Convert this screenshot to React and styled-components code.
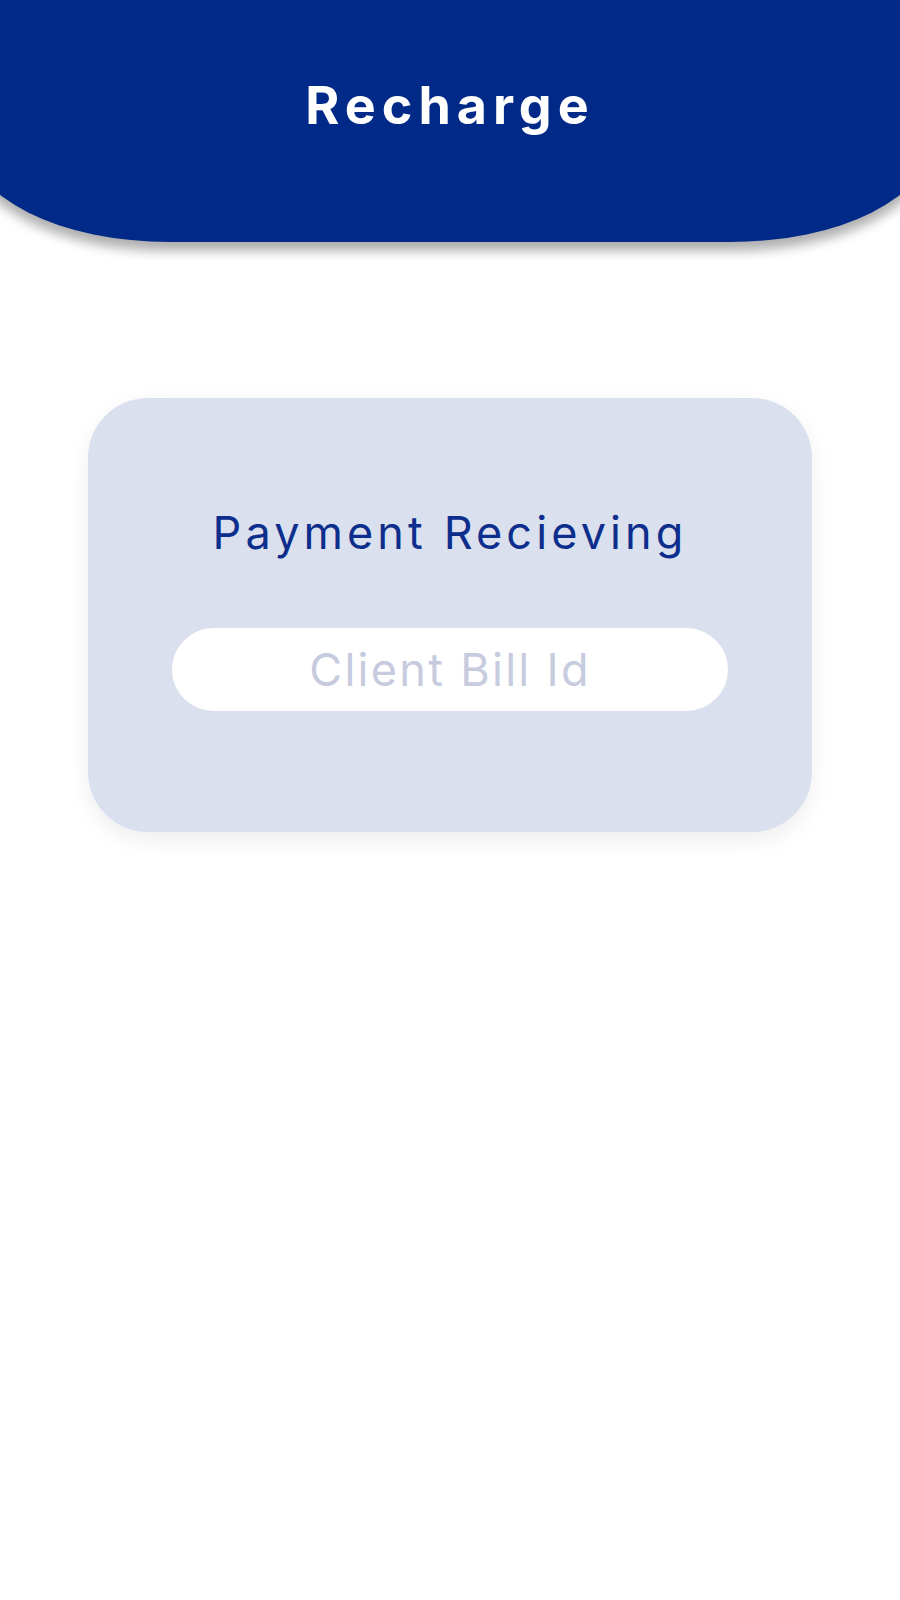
import React from "react";
import styled, { createGlobalStyle } from "styled-components";

const GlobalStyle = createGlobalStyle`
  html, body {
    margin: 0;
    padding: 0;
    background: #ffffff;
  }
  body {
    font-family: Inter, "Open Sans", sans-serif;
    overflow-x: hidden;
  }
  * { box-sizing: border-box; }
`;

const Page = styled.div`
  width: 900px;
  min-height: 1600px;
  background: #ffffff;
  display: flex;
  flex-direction: column;
  align-items: center;
  overflow: hidden;
`;

const Header = styled.header`
  align-self: stretch;
  margin: 0 -30px;
  height: 242px;
  background: #012a88;
  border-bottom-left-radius: 200px 100px;
  border-bottom-right-radius: 200px 100px;
  box-shadow: 0 9px 12px rgba(0, 0, 0, 0.32);
  display: flex;
  justify-content: center;
  padding-top: 74px;
`;

const Title = styled.h1`
  margin: 0;
  font-family: Inter, sans-serif;
  font-weight: 700;
  font-size: 52px;
  line-height: 64px;
  letter-spacing: 6px;
  color: #ffffff;
`;

const Card = styled.section`
  margin-top: 156px;
  width: 724px;
  height: 434px;
  background: #dbe0ee;
  border-radius: 60px;
  box-shadow: 0 8px 22px rgba(0, 0, 0, 0.07);
  display: flex;
  flex-direction: column;
  align-items: center;
  padding-top: 107px;
`;

const CardTitle = styled.h2`
  margin: 0;
  font-family: Inter, sans-serif;
  font-weight: 400;
  font-size: 45px;
  line-height: 56px;
  letter-spacing: 4.1px;
  color: #0d2e8c;
`;

const Field = styled.input`
  margin-top: 67px;
  width: 556px;
  height: 83px;
  border: none;
  outline: none;
  border-radius: 42px;
  background: #ffffff;
  text-align: center;
  font-family: Inter, sans-serif;
  font-size: 45px;
  letter-spacing: 2.3px;
  color: #0d2e8c;
  padding: 0 24px;

  &::placeholder {
    color: #c6cbde;
  }
`;

export default function App() {
  return (
    <>
      <GlobalStyle />
      <Page>
        <Header>
          <Title>Recharge</Title>
        </Header>
        <Card>
          <CardTitle>Payment Recieving</CardTitle>
          <Field placeholder="Client Bill Id" />
        </Card>
      </Page>
    </>
  );
}
